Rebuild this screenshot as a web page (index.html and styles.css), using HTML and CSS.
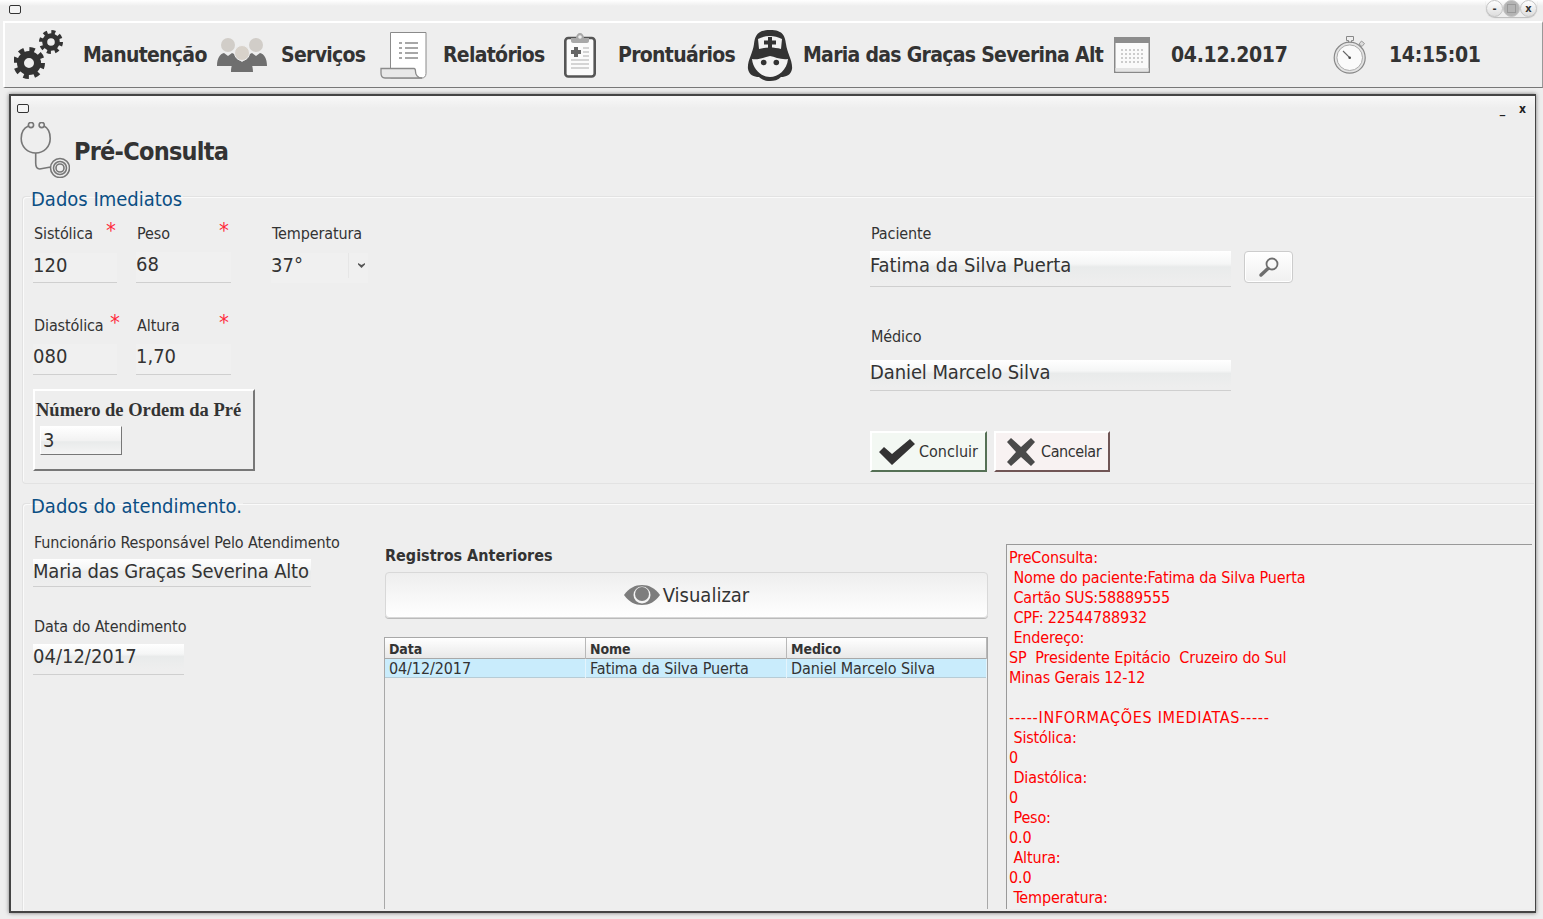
FILE: index.html
```html
<!DOCTYPE html>
<html lang="pt-BR">
<head>
    <meta charset="UTF-8">
    <title>Pré-Consulta</title>
    <link rel="stylesheet" href="styles.css">
</head>
<body>
    <div class="titlebar">
        <span class="win-icon"></span>
        <div class="win-buttons">
            <span class="win-btn">-</span>
            <span class="win-btn max"><i></i></span>
            <span class="win-btn">x</span>
        </div>
    </div>

    <div class="toolbar">
        <svg class="ic" width="50" height="52" viewBox="0 0 50 52">
            <g fill="none" stroke="#333">
                <circle cx="15" cy="34" r="8.5" stroke-width="7"/>
                <circle cx="15" cy="34" r="13.5" stroke-width="5" stroke-dasharray="5.3 5.3"/>
                <circle cx="37" cy="13" r="6.3" stroke-width="5"/>
                <circle cx="37" cy="13" r="10" stroke-width="4" stroke-dasharray="3.93 3.93"/>
            </g>
        </svg>
        <span class="tb-text">Manutenção</span>
        <svg class="ic" width="50" height="36" viewBox="0 0 50 36">
            <circle cx="11" cy="8" r="7" fill="#d1cdc8"/>
            <circle cx="39" cy="8" r="7" fill="#d1cdc8"/>
            <path d="M0 29c0-8 3-12 7-13l4 3 4-3c3 1 5 3 6 5l-4 8zM50 29c0-8-3-12-7-13l-4 3-4-3c-3 1-5 3-6 5l4 8z" fill="#6f6f6f"/>
            <path d="M14 35c0-8 3-12 7-13l4 3 4-3c4 1 7 5 7 13z" fill="#6f6f6f"/>
            <circle cx="25" cy="16" r="7.5" fill="#d8d2ca" stroke="#eee"/>
        </svg>
        <span class="tb-text">Serviços</span>
        <svg class="ic" width="47" height="48" viewBox="0 0 47 48">
            <path d="M10.500 1.500H46v41c0 3-2 4.500-4 4.500H10.500z" fill="#fff" stroke="#8a8a8a"/>
            <path d="M1 37.500h33c1 0 1.500 1 1.500 3 0 3 2 6.500 6.500 6.500H5c-3 0-4-2-4-5z" fill="#e8e8e8" stroke="#8a8a8a" stroke-width="1.300"/>
            <path d="M19 12h3M25 12h13M19 17h3M25 17h13M19 22h3M25 22h13M19 27h3M25 27h13" stroke="#8a8a8a" stroke-width="1.500"/>
        </svg>
        <span class="tb-text">Relatórios</span>
        <svg class="ic" width="34" height="45" viewBox="0 0 34 45">
            <rect x="2.300" y="5" width="29.400" height="38.500" rx="3" fill="#fbfbfb" stroke="#555" stroke-width="2.600"/>
            <path d="M8 5h5c0-3 2-5 4-5s4 2 4 5h5v3c0 1-1 2-2 2H10c-1 0-2-1-2-2z" fill="#a8a8a8"/>
            <circle cx="17" cy="4" r="1.800" fill="#eee"/>
            <path d="M11 14v3H8v4h3v3h4v-3h3v-4h-3v-3z" fill="#666"/>
            <path d="M20 15h6M20 19h6M20 23h6M8 27h18M8 31h18M8 35h18" stroke="#c8c8c8" stroke-width="1.600"/>
        </svg>
        <span class="tb-text">Prontuários</span>
        <svg class="ic" width="46" height="51" viewBox="0 0 46 51">
            <path d="M23 0C10 0 8 6 7 14c-1 9-7 17-6 25 1 6 6 8 11 8 3 3 7 4 11 4s8-1 11-4c5 0 10-2 11-8 1-8-5-16-6-25C38 6 36 0 23 0z" fill="#333"/>
            <path d="M11 9c8-4 16-4 24 0l-1 10c-7-2-15-2-22 0z" fill="#f2f2f2"/>
            <path d="M21 7v3.500h-4v4h4V18h4v-3.500h4v-4h-4V7z" fill="#333"/>
            <path d="M5 29c7 1 13-2 18-3 5 1 11 4 18 3-1 11-10 18-18 18S6 40 5 29z" fill="#f2f2f2"/>
            <circle cx="16.700" cy="32.500" r="2.800" fill="#333"/>
            <circle cx="29.300" cy="32.500" r="2.800" fill="#333"/>
        </svg>
        <span class="tb-text">Maria das Graças Severina Alt</span>
        <svg class="ic" width="36" height="36" viewBox="0 0 36 36">
            <rect x=".75" y=".75" width="34.500" height="34.500" fill="#fafafa" stroke="#888" stroke-width="1.500"/>
            <rect x="0" y="0" width="36" height="6" fill="#8c8c8c"/>
            <rect x="1.500" y="31" width="33" height="3.500" fill="#e4e4e4"/>
            <path d="M7 13h22M7 17h22M7 21h22M7 25h22" stroke="#ccc" stroke-width="2" stroke-dasharray="2 2"/>
        </svg>
        <span class="tb-text tb-num">04.12.2017</span>
        <svg class="ic" width="34" height="38" viewBox="0 0 34 38">
            <path d="M13.500 .5h7v4h-2v2h-3v-2h-2z" fill="#eee" stroke="#888"/>
            <path d="M26 8l2.500-3 3 2.500-2.500 3z" fill="#ddd" stroke="#999"/>
            <circle cx="16.700" cy="21.700" r="15.500" fill="#e4e4e4" stroke="#888" stroke-width="1.200"/>
            <circle cx="16.700" cy="21.700" r="12.800" fill="#fafafa" stroke="#aaa"/>
            <path d="M10 15l6.700 6.700" stroke="#666" stroke-width="1.100"/>
            <circle cx="16.700" cy="21.700" r="1.300" fill="#444"/>
        </svg>
        <span class="tb-text tb-num">14:15:01</span>
    </div>

    <div class="window">
        <div class="window-title">
            <span class="win-icon"></span>
            <div class="window-ctrl"><span>_</span><span>x</span></div>
        </div>

        <div class="page-head">
            <svg width="50" height="56" viewBox="0 0 50 56">
                <g fill="none" stroke="#777" stroke-width="1.600">
                    <circle cx="11" cy="3" r="2.600"/>
                    <circle cx="21.700" cy="3" r="2.600"/>
                    <path d="M8.500 4C3.500 6 1.200 10 1.200 16.500c0 8 6 14.500 14.500 14.500s14.500-6.500 14.500-14.500C30.200 10 28 6 24 4"/>
                    <path d="M15.700 31v10c0 4 1 6 4 6l11-2"/>
                    <circle cx="40" cy="46" r="9.500"/>
                    <circle cx="40" cy="46" r="6.500"/>
                    <circle cx="40" cy="46" r="4"/>
                </g>
            </svg>
            <h1>Pré-Consulta</h1>
        </div>

        <fieldset class="group group-top">
            <legend>Dados Imediatos</legend>
            <div class="left-col">
                <div class="vitals">
                    <div class="field">
                        <label>Sistólica <b class="req req-a">*</b></label>
                        <div class="value">120</div>
                    </div>
                    <div class="field">
                        <label>Peso <b class="req req-b">*</b></label>
                        <div class="value up">68</div>
                    </div>
                    <div class="field field-temp">
                        <label>Temperatura</label>
                        <div class="value combo">37°<span class="combo-arrow"><svg width="7" height="5" viewBox="0 0 7 5"><path d="M0 0l3.500 2L7 0v1.500L3.500 5 0 1.500z" fill="#555"/></svg></span></div>
                    </div>
                    <div class="field">
                        <label>Diastólica <b class="req req-c">*</b></label>
                        <div class="value up">080</div>
                    </div>
                    <div class="field">
                        <label>Altura <b class="req req-d">*</b></label>
                        <div class="value up">1,70</div>
                    </div>
                </div>
                <div class="order-box">
                    <h4>Número de Ordem da Pré</h4>
                    <div class="order-input">3</div>
                </div>
            </div>

            <div class="right-col">
                <label>Paciente</label>
                <div class="patient-row">
                    <div class="glossy wide">Fatima da Silva Puerta</div>
                    <button class="search-btn">
                        <svg width="22" height="22" viewBox="0 0 22 22">
                            <circle cx="14" cy="8" r="5.500" fill="none" stroke="#6e6e6e" stroke-width="1.800"/>
                            <path d="M10 12.500L3 19" stroke="#6e6e6e" stroke-width="3.500" stroke-linecap="round"/>
                        </svg>
                    </button>
                </div>
                <label class="label-medico">Médico</label>
                <div class="glossy wide short">Daniel Marcelo Silva</div>
                <div class="actions">
                    <button class="act act-ok">
                        <svg width="36" height="26" viewBox="0 0 36 26"><path d="M0 13l5-5 8 7L31 0l5 5-23 21z" fill="#333"/></svg>
                        Concluir
                    </button>
                    <button class="act act-no">
                        <svg width="28" height="28" viewBox="0 0 28 28"><path d="M4 0l10 9 10-9 4 4-9 10 9 10-4 4-10-9-10 9-4-4 9-10L0 4z" fill="#4a4a4a"/></svg>
                        Cancelar
                    </button>
                </div>
            </div>
        </fieldset>

        <fieldset class="group group-bottom">
            <legend>Dados do atendimento.</legend>
            <div class="staff-col">
                <label>Funcionário Responsável Pelo Atendimento</label>
                <div class="glossy staff">Maria das Graças Severina Alto</div>
                <label class="label-data">Data do Atendimento</label>
                <div class="glossy date">04/12/2017</div>
            </div>

            <div class="records-col">
                <h4>Registros Anteriores</h4>
                <button class="view-btn">
                    <svg width="36" height="22" viewBox="0 0 36 22">
                        <path d="M0 11C5 4 11 1 18 1s13 3 18 10c-5 7-11 10-18 10S5 18 0 11z" fill="#7d7d7d"/>
                        <circle cx="18" cy="11" r="8.500" fill="#f4f4f4"/>
                        <circle cx="18" cy="10" r="7" fill="#7d7d7d"/>
                    </svg>
                    Visualizar
                </button>
                <div class="table">
                    <div class="t-row t-head"><span>Data</span><span>Nome</span><span>Medico</span></div>
                    <div class="t-row t-sel"><span>04/12/2017</span><span>Fatima da Silva Puerta</span><span>Daniel Marcelo Silva</span></div>
                </div>
            </div>

            <div class="report">PreConsulta:
 Nome do paciente:Fatima da Silva Puerta
 Cartão SUS:58889555
 CPF: 22544788932
 Endereço:
SP  Presidente Epitácio  Cruzeiro do Sul
Minas Gerais 12-12

<span class="caps">-----INFORMAÇÕES IMEDIATAS-----</span>
 Sistólica:
0
 Diastólica:
0
 Peso:
0.0
 Altura:
0.0
 Temperatura:</div>
        </fieldset>
    </div>
</body>
</html>
```

FILE: styles.css
```css
* {
    box-sizing: border-box;
}
body {
    margin: 0;
    width: 1543px;
    height: 919px;
    overflow: hidden;
    background-color: #eeeeee;
    color: #333;
    font-family: "DejaVu Sans Condensed", "DejaVu Sans", sans-serif;
    font-stretch: condensed;
}
button {
    font-family: inherit;
    font-stretch: inherit;
    color: inherit;
    cursor: pointer;
}
label {
    display: block;
    font-size: 16px;
    line-height: 20px;
    letter-spacing: -0.1px;
}

/* window frame */
.titlebar {
    height: 21px;
    display: flex;
    align-items: flex-start;
    justify-content: space-between;
    padding: 5px 6px 0 9px;
    background: linear-gradient(#ffffff, #eeeeee 6px);
}
.win-icon {
    display: block;
    width: 12px;
    height: 9px;
    border: 1px solid #333;
    border-radius: 2px;
    background: #f4f4f4;
}
.win-buttons {
    display: flex;
    margin-top: -5px;
    height: 17px;
    border-radius: 0 0 9px 9px;
    box-shadow: 0 1px 1px #bbb;
}
.win-btn {
    width: 17px;
    height: 17px;
    border: 1px solid #c4c4c4;
    border-radius: 50%;
    background: linear-gradient(#fff, #ddd);
    font-size: 11px;
    font-weight: bold;
    line-height: 15px;
    text-align: center;
}
.win-btn.max {
    background: #b4b4b4;
    padding: 3px;
}
.win-btn.max i {
    display: block;
    height: 9px;
    width: 9px;
    border: 1px solid #999;
}

.toolbar {
    height: 67px;
    margin-left: 3px;
    display: grid;
    grid-template-columns: 69px 134px 64px 99px 63px 120px 55px 129px 56px 311px 57px 162px 56px 1fr;
    align-items: center;
    padding: 0 0 0 9px;
    background: #eeeeee;
    border-top: 2px solid #fff;
    border-left: 2px solid #fff;
    border-bottom: 1px solid #777;
    border-right: 1px solid #999;
}
.tb-text {
    font-size: 21px;
    font-weight: bold;
    letter-spacing: -0.7px;
    white-space: nowrap;
}
.tb-num {
    letter-spacing: -0.3px;
}
.ic {
    display: block;
}

/* internal window */
.window {
    margin: 6px 0 0 9px;
    width: 1527px;
    height: 819px;
    overflow: hidden;
    border: 2px solid #444;
    border-right-width: 1px;
    border-left-width: 2px;
    box-shadow: 0 0 4px rgba(0, 0, 0, 0.5);
    background: #eeeeee;
}
.window-title {
    height: 12px;
    display: flex;
    align-items: flex-start;
    justify-content: space-between;
    padding: 8px 9px 0 6px;
    background: linear-gradient(#f8f8f8, #eeeeee);
}
.window-ctrl {
    display: flex;
    gap: 14px;
    font-size: 12px;
    font-weight: bold;
    line-height: 10px;
    color: #222;
}
.page-head {
    height: 80px;
    display: flex;
    align-items: center;
    padding: 4px 0 0 9px;
    gap: 4px;
}
.page-head h1 {
    margin: 2px 0 0;
    font-size: 25px;
    letter-spacing: -0.75px;
    font-weight: bold;
}

/* groups */
.group {
    margin: 0 1px 0 11px;
    padding: 0 0 0 10px;
    min-width: 0;
    display: flex;
    border: 1px solid #e2e2e2;
    border-right: 0;
    border-radius: 4px 0 0 4px;
    box-shadow: inset 1px 1px 0 #fafafa;
}
.group legend {
    margin-left: -3px;
    padding: 5px 1px 0;
    font-size: 20px;
    line-height: 26px;
    color: #0b4f84;
}
.group-top {
    height: 303px;
    margin-top: -7px;
}
.group-bottom {
    height: 440px;
    margin-top: 4px;
}

.left-col {
    width: 837px;
    padding-top: 12px;
}
.vitals {
    display: grid;
    grid-template-columns: 103px 135px 97px;
    grid-auto-rows: 92px;
}
.field {
    position: relative;
    width: 84px;
}
.field label {
    padding-left: 1px;
}
.field:nth-child(3n+2) {
    width: 95px;
}
.field-temp {
    width: 97px;
}
.req {
    position: absolute;
    top: -3px;
    font-size: 22px;
    font-weight: normal;
    color: #ff2a3c;
}
.req-a { left: 73px; }
.req-b { left: 83px; }
.req-c { left: 77px; }
.req-d { left: 83px; }
.value {
    margin-top: 9px;
    height: 30px;
    font-size: 20px;
    line-height: 24px;
    background: #f0f0f0;
    border-bottom: 1px solid #cfcfcf;
}
.value.up {
    margin-top: 8px;
    height: 31px;
}
.combo {
    display: flex;
    justify-content: space-between;
    border-bottom: 0;
}
.combo-arrow {
    width: 20px;
    height: 25px;
    border-left: 1px solid #e6e6e6;
    padding-left: 6px;
    display: flex;
    align-items: center;
    justify-content: center;
}
.order-box {
    width: 222px;
    height: 82px;
    margin-top: -19px;
    padding: 8px 0 0 1px;
    border: 2px solid;
    border-color: #fff #777 #777 #fff;
}
.order-box h4 {
    margin: 0;
    font-family: "Liberation Serif", serif;
    font-stretch: normal;
    font-size: 18.5px;
    line-height: 22px;
    font-weight: bold;
}
.order-input {
    width: 82px;
    height: 29px;
    margin: 5px 0 0 4px;
    padding-left: 2px;
    font-size: 20px;
    line-height: 27px;
    border: 1px solid;
    border-color: #fff #777 #777 #fff;
    background: linear-gradient(#ffffff, #f2f2f2 50%, #e9ebeb 55%, #f4f4f4);
}

.right-col {
    padding-top: 12px;
}
.right-col > label {
    padding-left: 1px;
}
.patient-row {
    display: flex;
    align-items: flex-start;
    gap: 13px;
    margin-top: 7px;
}
.glossy {
    height: 30px;
    font-size: 20px;
    line-height: 26px;
    white-space: nowrap;
    background: linear-gradient(#ffffff 0, #f5f6f6 40%, #e9ebeb 50%, #eeeeee 100%);
    box-shadow: 0 3px 0 #eeeeee, 0 4px 0 #cfcfcf;
}
.wide {
    width: 361px;
    height: 32px;
    line-height: 28px;
}
.wide.short {
    height: 27px;
    line-height: 25px;
    letter-spacing: -0.1px;
}
.search-btn {
    width: 49px;
    height: 32px;
    padding: 0;
    border: 1px solid #cccccc;
    border-radius: 4px;
    background: linear-gradient(#ffffff, #f0f0f0);
    box-shadow: inset 0 0 0 1px #fff;
    display: flex;
    align-items: center;
    justify-content: center;
}
.label-medico {
    margin-top: 44px;
    margin-bottom: 13px;
}
.actions {
    display: flex;
    gap: 7px;
    margin-top: 44px;
}
.act {
    height: 41px;
    padding: 0;
    display: flex;
    align-items: center;
    font-size: 16px;
    border: 2px solid #fff;
    border-right-color: #557055;
    border-bottom-color: #557055;
    outline: 0;
}
.act-ok {
    width: 117px;
    gap: 4px;
    padding-left: 7px;
    background: #f3f8f3;
}
.act-no {
    width: 116px;
    gap: 6px;
    padding-left: 11px;
    letter-spacing: -0.4px;
    background: #f8f2f2;
    border-right-color: #705555;
    border-bottom-color: #705555;
}

.staff-col {
    width: 351px;
    padding-top: 14px;
}
.staff-col label {
    padding-left: 1px;
}
.staff {
    width: 278px;
    height: 25px;
    margin-top: 6px;
    line-height: 25px;
    letter-spacing: -0.2px;
    box-shadow: 0 2px 0 #eeeeee, 0 3px 0 #cfcfcf;
}
.staff-col .label-data {
    margin-top: 33px;
}
.date {
    width: 151px;
    height: 25px;
    margin-top: 7px;
    line-height: 25px;
    box-shadow: 0 5px 0 #eeeeee, 0 6px 0 #cfcfcf;
}
.records-col {
    width: 604px;
    margin-right: 18px;
}
.records-col h4 {
    margin: 26px 0 0 1px;
    font-size: 16px;
    line-height: 22px;
    font-weight: bold;
}
.view-btn {
    width: 603px;
    height: 46px;
    margin: 5px 0 19px 1px;
    border: 1px solid #d8d8d8;
    border-radius: 4px;
    background: linear-gradient(#eeeeee, #ffffff);
    box-shadow: 0 1px 0 #bbb;
    font-size: 20px;
    display: flex;
    align-items: center;
    justify-content: center;
    gap: 3px;
}
.table {
    height: 272px;
    border: 1px solid #a8a8a8;
    border-bottom: 0;
}
.t-row {
    display: grid;
    grid-template-columns: 201px 201px 1fr;
    font-size: 16px;
    letter-spacing: -0.1px;
}
.t-row span {
    padding-left: 4px;
    border-right: 1px solid #b8b8b8;
}
.t-head {
    height: 21px;
    font-size: 14px;
    line-height: 22px;
    font-weight: bold;
    border-bottom: 1px solid #a8a8a8;
    background: linear-gradient(#ffffff, #e8e8e8);
}
.t-sel {
    height: 19px;
    line-height: 19px;
    background: #c9ecfc;
    border-bottom: 1px solid #b6ccd6;
}
.t-sel span {
    border-right-color: #e4f4fc;
}
.report {
    flex: 1;
    margin: 25px 2px 0 0;
    padding: 3px 0 0 2px;
    height: 365px;
    overflow: hidden;
    white-space: pre;
    font-size: 16px;
    line-height: 20px;
    letter-spacing: -0.15px;
    color: #ff0000;
    background: #f0f0f0;
    border-top: 1px solid #999;
    border-left: 1px solid #999;
}
.caps {
    letter-spacing: 0.7px;
}
```
